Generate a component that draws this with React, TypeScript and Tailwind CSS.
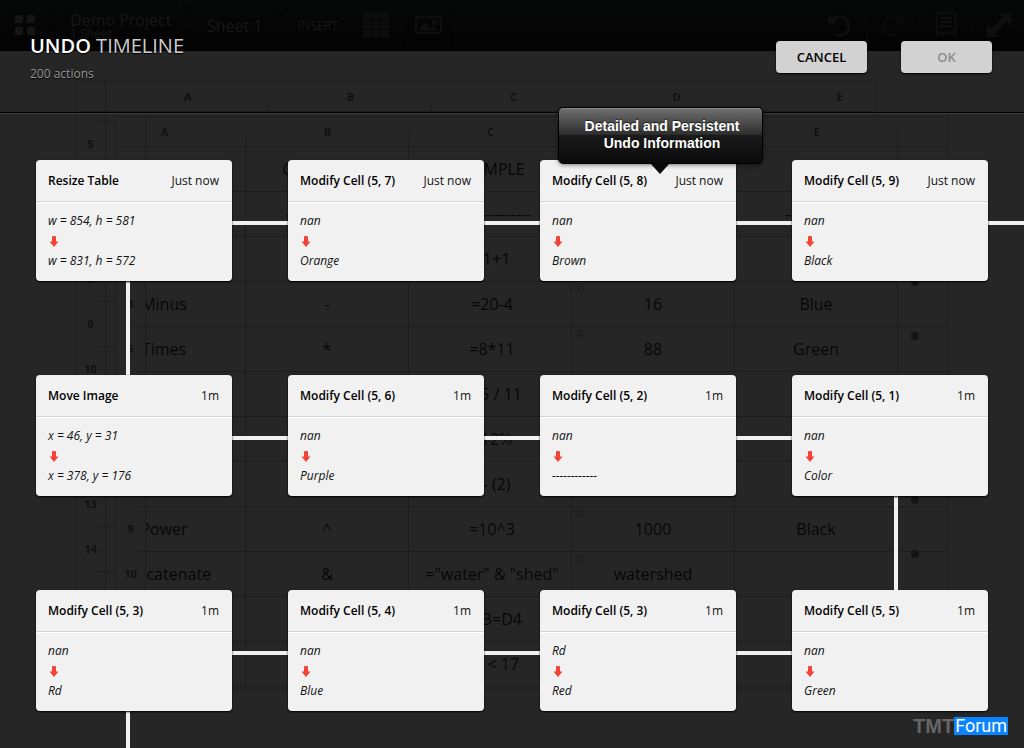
import React from 'react';

interface Action {
  title: string;
  time: string;
  from: string;
  to: string;
  right?: boolean;
  down?: 'start' | 'end';
  tip?: string[];
}

const actions: Action[] = [
  { title: 'Resize Table', time: 'Just now', from: 'w = 854, h = 581', to: 'w = 831, h = 572', right: true, down: 'start' },
  { title: 'Modify Cell (5, 7)', time: 'Just now', from: 'nan', to: 'Orange', right: true },
  { title: 'Modify Cell (5, 8)', time: 'Just now', from: 'nan', to: 'Brown', right: true, tip: ['Detailed and Persistent', 'Undo Information'] },
  { title: 'Modify Cell (5, 9)', time: 'Just now', from: 'nan', to: 'Black', right: true },
  { title: 'Move Image', time: '1m', from: 'x = 46, y = 31', to: 'x = 378, y = 176', right: true },
  { title: 'Modify Cell (5, 6)', time: '1m', from: 'nan', to: 'Purple', right: true },
  { title: 'Modify Cell (5, 2)', time: '1m', from: 'nan', to: '------------', right: true },
  { title: 'Modify Cell (5, 1)', time: '1m', from: 'nan', to: 'Color', down: 'end' },
  { title: 'Modify Cell (5, 3)', time: '1m', from: 'nan', to: 'Rd', right: true, down: 'start' },
  { title: 'Modify Cell (5, 4)', time: '1m', from: 'nan', to: 'Blue', right: true },
  { title: 'Modify Cell (5, 3)', time: '1m', from: 'Rd', to: 'Red', right: true },
  { title: 'Modify Cell (5, 5)', time: '1m', from: 'nan', to: 'Green' },
];

const columns = ['A', 'B', 'C', 'D', 'E'];

const rows: string[][] = [
  ['', 'CHARACTER', 'EXAMPLE', '', ''],
  ['', '----------------', '----------------', '', '------------'],
  ['', '', '=1+1', '', ''],
  ['Minus', '-', '=20-4', '16', 'Blue'],
  ['Times', '*', '=8*11', '88', 'Green'],
  ['', '', '=55 / 11', '', ''],
  ['', '', '=12%', '', ''],
  ['', '', '=- (2)', '', ''],
  ['Power', '^', '=10^3', '1000', 'Black'],
  ['Concatenate', '&', '="water" & "shed"', 'watershed', ''],
  ['', '', '=D3=D4', '', ''],
  ['', '', '=8 < 17', '', ''],
];

const backRows = [5, 6, 7, 8, 9, 10, 11, 12, 13, 14, 15, 16];

const Chevron: React.FC = () => (
  <svg className="w-[15px] h-full shrink-0" viewBox="0 0 15 51" fill="none" preserveAspectRatio="none">
    <path d="M0 0L13 25.5L0 51" stroke="#000" />
    <path d="M1 0L14 25.5L1 51" stroke="#0d0d0d" strokeWidth="0.8" />
  </svg>
);

const ToolButton: React.FC<{ label: string; children: React.ReactNode }> = ({ label, children }) => (
  <button type="button" aria-label={label} className="w-[53px] h-full flex items-center justify-center border-r border-[#080808]">
    <svg className="w-7 h-7" viewBox="0 0 28 28" fill="#0f0f0f">
      {children}
    </svg>
  </button>
);

const Toolbar: React.FC = () => (
  <div className="h-[51px] flex items-center bg-linear-to-b from-[#070808] to-[#030303] border-b border-black text-[#181818]">
    <button type="button" aria-label="Projects" className="w-[45px] h-full pl-[15px] flex items-center">
      <svg className="w-5 h-5" viewBox="0 0 20 20" fill="#151515">
        <rect width="8" height="8" rx="1" />
        <rect x="12" width="8" height="8" rx="1" />
        <rect y="12" width="8" height="8" rx="1" />
        <rect x="12" y="12" width="8" height="8" rx="1" />
      </svg>
    </button>
    <Chevron />
    <div className="w-[122px] pt-0.5 pl-[10px]">
      <div className="text-base leading-4">Demo Project</div>
      <div className="text-xs leading-3">1 Sheet</div>
    </div>
    <Chevron />
    <div className="w-[77px] pt-0.5 pl-[10px] text-base">Sheet 1</div>
    <Chevron />
    <div className="w-[60px] pt-0.5 pl-[9px] text-xs">INSERT</div>
    <ToolButton label="Insert table">
      {[1, 10, 19].map((y) => [2, 11, 20].map((x) => <rect key={`${x}-${y}`} x={x} y={y} width="8" height="8" rx="1" fill="#0d0d0d" />))}
    </ToolButton>
    <ToolButton label="Insert image">
      <rect x="2" y="6" width="25" height="16" rx="1" fill="none" stroke="#0f0f0f" strokeWidth="2" />
      <path d="M4 20L11 11L17 17L20 15L24 20Z" />
      <circle cx="20.5" cy="11.5" r="2.5" />
    </ToolButton>
    <div className="flex-1" />
    <div className="h-full flex -mr-0.5">
      <ToolButton label="Undo">
        <path d="M9 23.5A9.5 9.5 0 1 0 6.5 8.5" fill="none" stroke="#0f0f0f" strokeWidth="3" />
        <path d="M3 4L1 13L12 12Z" />
      </ToolButton>
      <ToolButton label="Redo">
        <path d="M19 23.5A9.5 9.5 0 1 1 21.5 8.5" fill="none" stroke="#0a0a0a" strokeWidth="3" />
        <path d="M25 4L27 13L16 12Z" fill="#0a0a0a" />
      </ToolButton>
      <ToolButton label="Notes">
        <path d="M4.5 2H23.5V24L20.5 20L17.5 24L14 20L10.5 24L7.5 20L4.5 24Z" fill="none" stroke="#0f0f0f" strokeWidth="2" />
        <path d="M8 6H20V8H8ZM8 10H20V12H8ZM8 14H20V16H8Z" />
      </ToolButton>
      <ToolButton label="Full screen">
        <path d="M14 2H26V14L22 10L10.5 22L14 26H2V14L6 18L18 6Z" />
      </ToolButton>
    </div>
  </div>
);

const BackTable: React.FC = () => (
  <div className="absolute left-[75px] top-[81px] w-[802px] h-[609px] overflow-hidden border border-[#1d1d1d]">
    <table className="w-[844px] table-fixed border-separate border-spacing-0 text-[11px] font-bold text-[#0f1114]">
      <thead>
        <tr className="h-[30px]">
          <th className="w-[30px] border-r border-b border-[#1d1d1d]" />
          {columns.map((c) => (
            <th key={c} className="w-[163px] pt-0.5 border-b border-[#1d1d1d] bg-[linear-gradient(to_bottom,transparent_40%,#1d1d1d)] bg-[length:1px_100%] bg-right bg-no-repeat">{c}</th>
          ))}
        </tr>
      </thead>
      <tbody>
        <tr className="h-[10px]">
          <td className="border-r border-[#1d1d1d] bg-[linear-gradient(to_right,transparent_30%,#1d1d1d)] bg-[length:100%_1px] bg-bottom bg-no-repeat" />
          <td colSpan={5} className="border-b border-[#1d1d1d]" />
        </tr>
        {backRows.map((n) => (
          <tr key={n} className="h-[45px]">
            <td className="border-r border-[#1d1d1d] bg-[linear-gradient(to_right,transparent_30%,#1d1d1d)] bg-[length:100%_1px] bg-bottom bg-no-repeat text-center">{n}</td>
            <td colSpan={5} className="border-b border-[#1d1d1d]" />
          </tr>
        ))}
      </tbody>
    </table>
  </div>
);

const NoteIcon: React.FC = () => (
  <svg className="absolute left-[3px] top-0.5 w-[9px] h-[9px]" viewBox="0 0 9 9" fill="none">
    <rect x="0.5" y="0.5" width="8" height="8" stroke="#202020" />
    <path d="M2 2.5H7M2 4.5H7M2 6.5H7" stroke="#1a1a1a" />
  </svg>
);

// column A is scrolled partly under the row numbers
const ScrolledCell: React.FC<{ children: React.ReactNode }> = ({ children }) => (
  <div className="overflow-hidden">
    <div className="-ml-[63px] text-center">{children}</div>
  </div>
);

const FrontTable: React.FC = () => (
  <div className="absolute left-[115px] top-[116px] w-[833px] h-[574px] overflow-hidden border border-[#1d1d1d] bg-[#262626]">
    <table className="w-full table-fixed border-separate border-spacing-0 text-base text-[#060606]">
      <thead className="text-[11px] text-[#0f1114]">
        <tr className="h-[30px]">
          <th className="w-[30px] border-r border-b border-[#1d1d1d]" />
          <th className="w-[100px] pt-0.5 border-b border-[#1d1d1d] bg-[linear-gradient(to_bottom,transparent_40%,#1d1d1d)] bg-[length:1px_100%] bg-right bg-no-repeat">
            <ScrolledCell>A</ScrolledCell>
          </th>
          {columns.slice(1).map((c) => (
            <th key={c} className="w-[163px] pt-0.5 border-b border-[#1d1d1d] bg-[linear-gradient(to_bottom,transparent_40%,#1d1d1d)] bg-[length:1px_100%] bg-right bg-no-repeat">{c}</th>
          ))}
          <th className="border-b border-[#1d1d1d]" />
        </tr>
      </thead>
      <tbody>
        {rows.map((row, i) => (
          <tr key={i} className="h-[45px]">
            <th className="border-r border-[#1d1d1d] bg-[linear-gradient(to_right,transparent_30%,#1d1d1d)] bg-[length:100%_1px] bg-bottom bg-no-repeat text-[11px] text-[#0f1114]">{i + 1}</th>
            {row.map((cell, j) => (
              <td key={j} className={`relative border-r border-b border-[#1d1d1d] p-0 text-center leading-6 ${j === 2 && i > 1 ? 'pl-1' : ''}`}>
                {j === 3 && i > 1 && <NoteIcon />}
                {j === 0 ? <ScrolledCell>{cell}</ScrolledCell> : cell}
              </td>
            ))}
            <td className="border-b border-[#1d1d1d]" />
          </tr>
        ))}
      </tbody>
    </table>
    <div className="absolute right-7 top-[161px] h-[280px] flex flex-col justify-between">
      {[0, 1, 2, 3, 4, 5].map((n) => (
        <span key={n} className="w-2 h-2 rounded-full bg-[#141414]" />
      ))}
    </div>
  </div>
);

const Tooltip: React.FC<{ lines: string[] }> = ({ lines }) => (
  <div role="tooltip" className="absolute left-[18px] top-[-53px] z-10 w-[205px] h-[57px] rounded-[5px] border border-black bg-[linear-gradient(to_bottom,#707070,#2e2e2e_48%,#1b1b1b_49%,#0b0b0b)] shadow-[inset_0_1px_0_#8a8a8a,0_1px_4px_rgba(0,0,0,0.5)] pt-[10px] pl-[3px] text-center text-sm leading-[17px] font-bold text-white font-['Liberation_Sans',Arial,sans-serif] [text-shadow:0_-1px_1px_rgba(0,0,0,0.6)]">
    {lines.map((line) => (
      <div key={line} className="whitespace-nowrap">{line}</div>
    ))}
    <svg className="absolute left-[91px] top-full w-5 h-[11px]" viewBox="0 0 20 11" fill="#0b0b0b">
      <path d="M0 0H20L10 11Z" />
    </svg>
  </div>
);

const ActionCard: React.FC<{ action: Action }> = ({ action }) => (
  <li className="relative">
    {action.right && <span className="absolute left-full top-[61px] w-14 h-1 bg-[#f1f1f1]" />}
    {action.down === 'start' && <span className="absolute left-[90px] top-full w-1 h-[94px] bg-[#f1f1f1]" />}
    {action.down === 'end' && <span className="absolute left-[102px] top-full w-1 h-[94px] bg-[#f1f1f1]" />}
    <article className="relative rounded bg-[#f1f1f1] text-xs text-[#111] shadow-[0_1px_2px_#000]">
      <header className="h-[42px] pl-3 pr-[13px] flex items-center justify-between border-b border-[#d2d2d2]">
        <h2 className="font-semibold text-black">{action.title}</h2>
        <time>{action.time}</time>
      </header>
      <div className="border-t border-white px-3 pt-2 pb-[10px] italic leading-5">
        <p>{action.from}</p>
        <div className="h-5 flex items-end pl-px pb-1">
          <svg className="w-[10px] h-[11px]" viewBox="0 0 10 11" fill="#f44336">
            <path d="M3 1Q3 0 4 0H6Q7 0 7 1V5.5H9.5L5 11L0.5 5.5H3Z" />
          </svg>
        </div>
        <p>{action.to}</p>
      </div>
    </article>
    {action.tip && <Tooltip lines={action.tip} />}
  </li>
);

const App: React.FC = () => {
  return (
    <div className="relative min-h-screen overflow-hidden bg-[#262626] font-['Open_Sans','Noto_Sans',sans-serif]">
      {/* Dimmed workspace behind the timeline */}
      <div className="absolute inset-0 overflow-hidden">
        <Toolbar />
        <BackTable />
        <FrontTable />
      </div>

      <div className="relative">
        <header className="h-[113px] pl-[30px] pr-8 flex justify-between border-b border-black shadow-[0_1px_0_#3c3c3c]">
          <div className="pt-8 [text-shadow:0_1px_1px_#000]">
            <h1 className="text-xl leading-7 font-normal text-[#cccccc]">
              <span className="font-semibold text-white">UNDO</span> TIMELINE
            </h1>
            <p className="mt-1 text-xs leading-5 text-[#969696]">200 actions</p>
          </div>
          <div className="pt-[41px] flex gap-[34px]">
            <button type="button" className="w-[91px] h-8 pt-0.5 rounded bg-[#d2d2d2] text-[13px] font-semibold text-black shadow-[0_1px_2px_#000]">
              CANCEL
            </button>
            <button type="button" disabled className="w-[91px] h-8 pt-0.5 rounded bg-[#d2d2d2] text-[13px] font-semibold text-[#8c8c8c] shadow-[0_1px_2px_#000]">
              OK
            </button>
          </div>
        </header>

        <ol className="px-9 pt-[47px] pb-[37px] grid grid-cols-4 gap-x-14 gap-y-[94px]">
          {actions.map((action, i) => (
            <ActionCard key={i} action={action} />
          ))}
        </ol>
      </div>

      <div className="absolute right-4 bottom-[13px] flex items-center leading-[18px]">
        <span className="text-xl leading-[18px] font-bold text-[#666] font-['Liberation_Sans',Arial,sans-serif]">TMT</span>
        <span className="px-px text-lg leading-[18px] bg-[#0a84ff] text-white font-['Roboto',sans-serif]">Forum</span>
      </div>
    </div>
  );
};

export default App;
